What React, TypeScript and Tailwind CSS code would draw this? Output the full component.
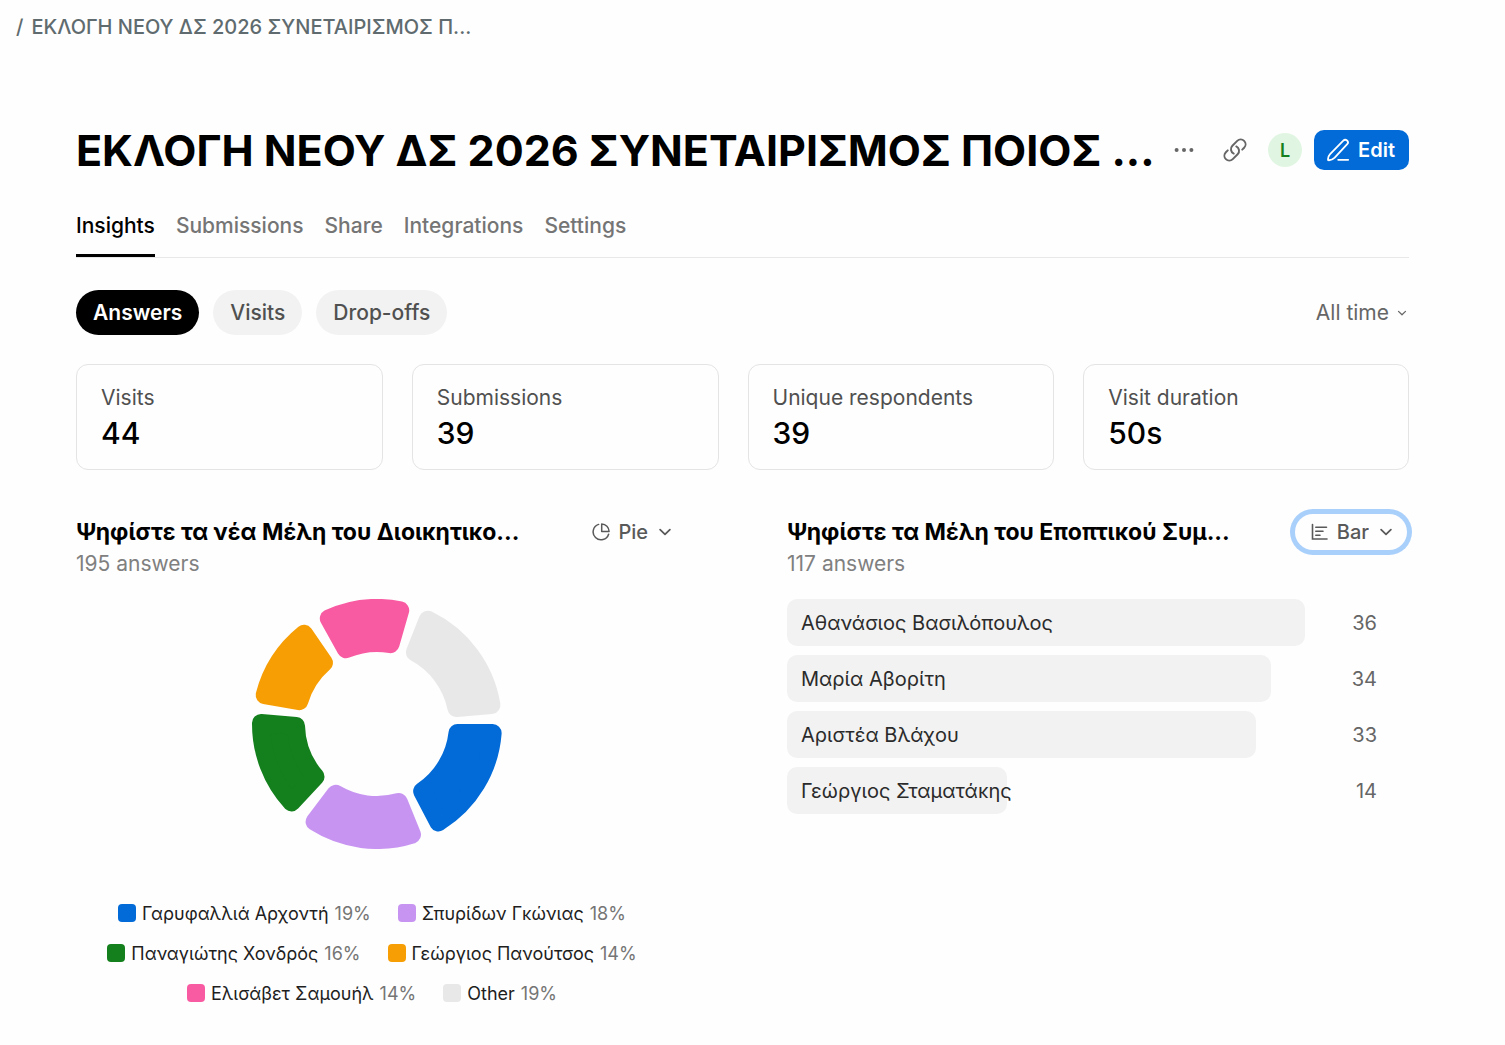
import React from "react";
import { clsx } from "clsx";

interface Slice {
  name: string;
  percent: number;
  color: string;
  swatch: string;
  start: number;
  end: number;
}

const TABS = ["Insights", "Submissions", "Share", "Integrations", "Settings"];
const VIEWS = ["Answers", "Visits", "Drop-offs"];

const STATS = [
  { label: "Visits", value: "44" },
  { label: "Submissions", value: "39" },
  { label: "Unique respondents", value: "39" },
  { label: "Visit duration", value: "50s" },
];

// start / end are degrees, clockwise from three o'clock
const SLICES: Slice[] = [
  { name: "Γαρυφαλλιά Αρχοντή", percent: 19, color: "#026bd8", swatch: "bg-[#026bd8]", start: 0, end: 62.5 },
  { name: "Σπυρίδων Γκώνιας", percent: 18, color: "#c795f1", swatch: "bg-[#c795f1]", start: 68, end: 127 },
  { name: "Παναγιώτης Χονδρός", percent: 16, color: "#147f1d", swatch: "bg-[#147f1d]", start: 133, end: 185 },
  { name: "Γεώργιος Πανούτσος", percent: 14, color: "#f79e05", swatch: "bg-[#f79e05]", start: 190, end: 235.5 },
  { name: "Ελισάβετ Σαμουήλ", percent: 14, color: "#f95ba2", swatch: "bg-[#f95ba2]", start: 241, end: 286 },
  { name: "Other", percent: 19, color: "#e8e8e8", swatch: "bg-[#e8e8e8]", start: 291.5, end: 355 },
];

const LEGEND_ROWS = [SLICES.slice(0, 2), SLICES.slice(2, 4), SLICES.slice(4, 6)];

const BARS = [
  { name: "Αθανάσιος Βασιλόπουλος", count: 36, width: 100 },
  { name: "Μαρία Αβορίτη", count: 34, width: 93.4 },
  { name: "Αριστέα Βλάχου", count: 33, width: 90.5 },
  { name: "Γεώργιος Σταματάκης", count: 14, width: 42.5 },
];

const OUTER = 125;
const INNER = 72;
const CORNER = 9;

// The path is inset by CORNER, the round stroke fills it back out
function slicePath(start: number, end: number) {
  const outer = OUTER - CORNER;
  const inner = INNER + CORNER;
  const point = (radius: number, deg: number, side: number) => {
    const angle = (deg * Math.PI) / 180 + side * Math.asin(CORNER / radius);
    return `${(radius * Math.cos(angle)).toFixed(2)} ${(radius * Math.sin(angle)).toFixed(2)}`;
  };
  return [
    `M${point(outer, start, 1)}`,
    `A${outer} ${outer} 0 0 1 ${point(outer, end, -1)}`,
    `L${point(inner, end, -1)}`,
    `A${inner} ${inner} 0 0 0 ${point(inner, start, 1)}`,
    "Z",
  ].join(" ");
}

function Chevron({ className }: { className: string }) {
  return (
    <svg viewBox="0 0 12 12" fill="none" stroke="currentColor" strokeWidth="1.5" strokeLinecap="round" strokeLinejoin="round" className={className}>
      <path d="M1.8 4 6 8.1 10.2 4" />
    </svg>
  );
}

function PieIcon() {
  return (
    <svg viewBox="0 0 18 18" fill="none" stroke="currentColor" strokeWidth="1.5" strokeLinejoin="round" className="size-[18px]">
      <path d="M6.6 1.4A7.9 7.9 0 1 0 16.6 11.2" strokeLinecap="round" />
      <path d="M9.7 1v7.6h7.4A7.6 7.6 0 0 0 9.7 1Z" />
    </svg>
  );
}

function BarIcon() {
  return (
    <svg viewBox="0 0 18 18" fill="none" stroke="currentColor" strokeWidth="1.6" strokeLinecap="round" className="size-[18px]">
      <path d="M1.5 1.5v14.5h14.5M4.8 4.2h10.7M4.8 8.2h7.2M4.8 12.2h4.2" />
    </svg>
  );
}

function LinkIcon() {
  return (
    <svg viewBox="0 0 24 24" fill="none" stroke="currentColor" strokeWidth="1.8" strokeLinecap="round" strokeLinejoin="round" className="size-[26px]">
      <path d="M13.19 8.688a4.5 4.5 0 0 1 1.242 7.244l-4.5 4.5a4.5 4.5 0 0 1-6.364-6.364l1.757-1.757m13.35-.622 1.757-1.757a4.5 4.5 0 0 0-6.364-6.364l-4.5 4.5a4.5 4.5 0 0 0 1.242 7.244" />
    </svg>
  );
}

function PenIcon() {
  return (
    <svg viewBox="0 0 24 24" fill="none" stroke="currentColor" strokeWidth="1.8" strokeLinecap="round" strokeLinejoin="round" className="size-6">
      <path d="M2.1 22.2c-.3-2.3.5-4.5 2-6.1L17.3 2.7a2.6 2.6 0 0 1 3.9 3.5L8.7 19.7c-1.7 1.7-4.1 2.8-6.6 2.5Z" />
      <path d="M12.2 21.8h10" />
    </svg>
  );
}

function ChartHeader({ title, answers, type, active }: { title: string; answers: number; type: string; active?: boolean }) {
  return (
    <div className="flex items-start justify-between">
      <div className="min-w-0">
        <h2 className="truncate text-[23px] leading-8 font-bold text-black">{title}</h2>
        <p className="text-[21px] leading-8 text-[#808080]">{answers} answers</p>
      </div>
      <div className={clsx("relative -mt-0.5 mr-0.5 flex h-9 shrink-0 items-center rounded-full pl-4 text-[#595959]", active && "ring-[5px] ring-[#a9cffb]")}>
        <span className="pointer-events-none">{type === "Pie" ? <PieIcon /> : <BarIcon />}</span>
        <select aria-label="Chart type" defaultValue={type} className="h-9 appearance-none rounded-full pr-[38px] pl-2 text-[20px] font-medium outline-none [field-sizing:content]">
          <option>{type}</option>
        </select>
        <Chevron className="pointer-events-none absolute right-3.5 size-[14px]" />
      </div>
    </div>
  );
}

export default function App() {
  return (
    <div className="min-h-screen bg-[#fefefe] pb-8 font-['Inter',sans-serif]">
      <nav className="flex h-[54px] items-center gap-2 px-4 text-[20px] font-medium text-[#5f6b6e]">
        <span>/</span>
        <a href="#form">ΕΚΛΟΓΗ ΝΕΟΥ ΔΣ 2026 ΣΥΝΕΤΑΙΡΙΣΜΟΣ Π...</a>
      </nav>

      <main className="mt-[68px] mr-24 ml-[76px]">
        <header className="flex h-14 items-center justify-between">
          <h1 className="truncate text-[43px] leading-14 font-bold text-black">ΕΚΛΟΓΗ ΝΕΟΥ ΔΣ 2026 ΣΥΝΕΤΑΙΡΙΣΜΟΣ ΠΟΙΟΣ ...</h1>
          <div className="flex shrink-0 items-center text-[#666666]">
            <button aria-label="More" className="mr-[26px]">
              <svg viewBox="0 0 24 24" fill="currentColor" className="size-6">
                <circle cx="4.6" cy="12" r="2" />
                <circle cx="12" cy="12" r="2" />
                <circle cx="19.4" cy="12" r="2" />
              </svg>
            </button>
            <button aria-label="Copy link" className="mr-5"><LinkIcon /></button>
            <span className="mr-3 flex size-[34px] items-center justify-center rounded-full bg-[#e1f6e2] text-[18px] font-semibold text-[#147f1d]">L</span>
            <button className="flex h-10 items-center gap-2 rounded-[10px] bg-[#026bd8] pr-3.5 pl-3 text-[20px] font-semibold text-white">
              <PenIcon />
              Edit
            </button>
          </div>
        </header>

        <div className="mt-7 flex gap-[21px] border-b border-[#e8e8e8]">
          {TABS.map((tab, index) => (
            <a
              key={tab}
              href={`#${tab.toLowerCase()}`}
              className={clsx(
                "border-b-3 pt-1 pb-3 text-[21px] leading-8 font-medium",
                index === 0 ? "border-black text-black" : "border-transparent text-[#757575]"
              )}
            >
              {tab}
            </a>
          ))}
        </div>

        <div className="mt-8 flex items-center justify-between">
          <div className="flex gap-3.5">
            {VIEWS.map((view, index) => (
              <button
                key={view}
                className={clsx(
                  "h-[45px] rounded-full px-[17px] text-[21px]",
                  index === 0 ? "bg-black font-semibold text-white" : "bg-[#f2f2f2] font-medium text-[#505050]"
                )}
              >
                {view}
              </button>
            ))}
          </div>
          <div className="relative flex items-center text-[#666666]">
            <select aria-label="Period" defaultValue="All time" className="appearance-none pr-5 text-[21px] outline-none [field-sizing:content]">
              <option>All time</option>
            </select>
            <Chevron className="pointer-events-none absolute right-0.5 size-2.5" />
          </div>
        </div>

        <div className="mt-[29px] grid grid-cols-[307fr_307fr_307fr_326fr] gap-[29px]">
          {STATS.map((stat) => (
            <div key={stat.label} className="rounded-xl border border-[#e4e4e4] px-6 py-[17px]">
              <div className="text-[21px] leading-8 text-[#505050]">{stat.label}</div>
              <div className="text-[30px] leading-[38px] font-medium text-black">{stat.value}</div>
            </div>
          ))}
        </div>

        <div className="mt-[46px] grid grid-cols-2 gap-[89px]">
          <section className="pr-2.5">
            <ChartHeader title="Ψηφίστε τα νέα Μέλη του Διοικητικο..." answers={195} type="Pie" />
            <div className="mt-[19px] pr-2.5">
              <svg viewBox="-125 -125 250 250" className="mx-auto size-[250px]" role="img" aria-label="Answers by member">
                {SLICES.map((slice) => (
                  <path
                    key={slice.name}
                    d={slicePath(slice.start, slice.end)}
                    fill={slice.color}
                    stroke={slice.color}
                    strokeWidth={CORNER * 2}
                    strokeLinejoin="round"
                  />
                ))}
              </svg>
              <div className="mt-11 pr-2.5">
                {LEGEND_ROWS.map((row, index) => (
                  <ul key={index} className="flex h-10 items-center justify-center gap-[27px] text-[18px]">
                    {row.map((slice) => (
                      <li key={slice.name} className="flex items-center gap-1.5 whitespace-nowrap text-[#1f1f1f]">
                        <span className={clsx("size-[18px] rounded", slice.swatch)} />
                        {slice.name}
                        <span className="text-[#757575]">{slice.percent}%</span>
                      </li>
                    ))}
                  </ul>
                ))}
              </div>
            </div>
          </section>

          <section>
            <ChartHeader title="Ψηφίστε τα Μέλη του Εποπτικού Συμ..." answers={117} type="Bar" active />
            <ul className="mt-[19px] flex flex-col gap-[9px]">
              {BARS.map((bar) => (
                <li key={bar.name} className="flex items-center pr-8 text-[20px]">
                  <div className="mr-6 flex-1">
                    <div className="flex h-[47px] items-center rounded-[10px] bg-[#f2f2f2] pl-3.5 whitespace-nowrap text-[#2b2b2b]" style={{ width: `${bar.width}%` }}>
                      {bar.name}
                    </div>
                  </div>
                  <span className="w-12 text-right text-[#666666]">{bar.count}</span>
                </li>
              ))}
            </ul>
          </section>
        </div>
      </main>
    </div>
  );
}
